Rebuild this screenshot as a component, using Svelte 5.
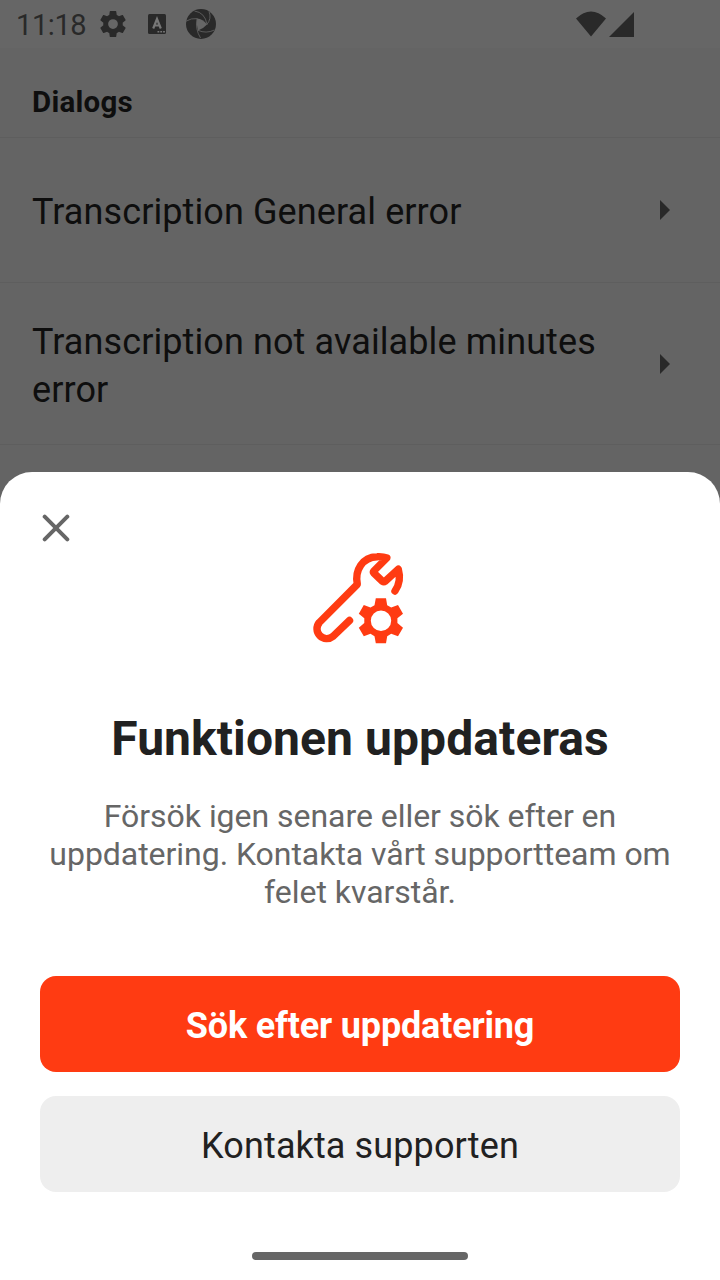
<script>
  const rows = ['Transcription General error', 'Transcription not available minutes error'];
  const gear = 'M19.14 12.94c.04-.3.06-.61.06-.94 0-.32-.02-.64-.07-.94l2.03-1.58c.18-.14.23-.41.12-.61l-1.92-3.32c-.12-.22-.37-.29-.59-.22l-2.39.96c-.5-.38-1.03-.7-1.62-.94l-.36-2.54c-.04-.24-.24-.41-.48-.41h-3.84c-.24 0-.43.17-.47.41l-.36 2.54c-.59.24-1.13.57-1.62.94l-2.39-.96c-.22-.08-.47 0-.59.22L2.74 8.87c-.12.21-.08.47.12.61l2.03 1.58c-.05.3-.09.63-.09.94s.02.64.07.94l-2.03 1.58c-.18.14-.23.41-.12.61l1.92 3.32c.12.22.37.29.59.22l2.39-.96c.5.38 1.03.7 1.62.94l.36 2.54c.05.24.24.41.48.41h3.84c.24 0 .44-.17.47-.41l.36-2.54c.59-.24 1.13-.56 1.62-.94l2.39.96c.22.08.47 0 .59-.22l1.92-3.32c.12-.22.07-.47-.12-.61z';
</script>

<div class="screen">
  <header class="status">
    <span class="time">11:18</span>
    <svg class="gear" viewBox="2.4 2.4 19.2 19.2"><path fill-rule="evenodd" d="{gear}M12 15.6a3.6 3.6 0 1 1 0-7.2 3.6 3.6 0 0 1 0 7.2z" /></svg>
    <svg class="keyboard" viewBox="0 0 18 20">
      <rect width="18" height="20" rx="1.5" />
      <path d="M5.2 14.5 9 5l3.8 9.5M6.5 11.5h5" fill="none" stroke="#777" stroke-width="2.2" />
      <path d="M9.5 17.7h1.8m1 0h1.8m1 0h1.8" stroke="#777" stroke-width="1.5" />
    </svg>
    <svg class="swirl" viewBox="0 0 30 30">
      <circle cx="15" cy="15" r="15" />
      <path d="M11 9.5Q17 10 21 15.5Q17 20 12 21.5Q10 15 11 9.5Z" fill="#666" />
      <g fill="none" stroke="#606060" stroke-width=".9">
        <path d="M0 12.2Q5 9 11.5 9.6" />
        <path d="M8.5 2Q19 3.5 21 15.5" />
        <path d="M23 2.5Q26 9.5 20.5 16" />
        <path d="M28.5 21Q20 25 12 21.3" />
        <path d="M11 10Q9 20 14.5 29" />
      </g>
    </svg>
    <svg class="signals" viewBox="0 0 59 26">
      <path d="M0 7.5Q15-6.5 30 7.5L15 25.5ZM58 1V26H33Z" />
    </svg>
  </header>
  <main>
    <h2>Dialogs</h2>
    {#each rows as row}
      <div class="row"><span>{row}</span><svg viewBox="0 0 10 20"><path d="M0 0 10 10 0 20Z" /></svg></div>
    {/each}
  </main>
  <section class="sheet">
    <button class="close" aria-label="Stäng"><svg viewBox="0 0 28 28"><path d="M2.7 2.7 25.3 25.3M25.3 2.7 2.7 25.3" /></svg></button>
    <svg class="tool" viewBox="0 0 120 120">
      <path class="wrench" d="M49.5 80.5 33 96.4A9.8 9.8 0 0 1 19.3 82.5L57.3 44.3C54.5 30 62.5 17.2 77 16.7C80.5 16.5 84 16.8 86.8 18L73.8 31Q73 32 73.8 33L82.4 41.2Q83.8 42.2 85.2 41.2L98.3 29.2C100.5 37 99.2 45 95 51" />
      <path class="cog" fill-rule="evenodd" d="M75.8 58.2H86L87.2 65.2 91.2 67.6 98 65 103 73.8 97.4 78.3V83L103 87.7 98 96.3 91.2 93.8 87.2 96.2 86 103.2H75.8L74.5 96.2 70.5 93.8 63.8 96.3 58.8 87.7 64.3 83V78.3L58.8 73.8 63.8 65 70.5 67.6 74.5 65.2ZM81 70.5A10.2 10.2 0 1 0 81 90.9A10.2 10.2 0 1 0 81 70.5Z" />
    </svg>
    <h1>Funktionen uppdateras</h1>
    <p>Försök igen senare eller sök efter en<br />uppdatering. Kontakta vårt supportteam om<br />felet kvarstår.</p>
    <button class="action primary">Sök efter uppdatering</button>
    <button class="action secondary">Kontakta supporten</button>
    <div class="home"></div>
  </section>
</div>

<style>
  :global(body) { margin: 0; }
  .screen { width: 720px; height: 1280px; display: flex; flex-direction: column; overflow: hidden; background: #646464; font-family: Roboto, sans-serif; color: #0e0e0e; }
  svg { display: block; flex: none; }
  .status { height: 48px; box-sizing: border-box; display: flex; align-items: center; padding: 0 85px 0 16px; background: #666; color: #292929; fill: #292929; }
  .time { width: 84px; font-size: 29px; line-height: 48px; letter-spacing: -.4px; padding-top: 2px; box-sizing: border-box; white-space: nowrap; }
  .gear { width: 26px; height: 26px; }
  .keyboard { width: 18px; height: 20px; margin-left: 22px; }
  .swirl { width: 30px; height: 30px; margin-left: 20px; }
  .signals { width: 59px; height: 26px; margin-left: auto; }
  main { height: 424px; flex: none; }
  h2 { height: 90px; margin: 0; box-sizing: border-box; padding: 31px 32px 0; border-bottom: 1px solid #5e5e5e; font-size: 29.5px; line-height: 46px; font-weight: 700; letter-spacing: .25px; }
  .row { height: 145px; display: flex; align-items: center; justify-content: space-between; box-sizing: border-box; padding: 0 50px 0 32px; border-bottom: 1px solid #5e5e5e; font-size: 36px; line-height: 48px; letter-spacing: .1px; }
  .row + .row { height: 162px; }
  .row span { width: 590px; padding-top: 3px; }
  .row + .row span { padding-top: 5px; }
  .row svg { width: 10px; height: 20px; fill: #292929; }
  .sheet { flex: 1; background: #fff; border-radius: 32px 32px 0 0; padding: 42px 40px 20px; box-sizing: border-box; display: flex; flex-direction: column; align-items: center; }
  button { font: inherit; border: 0; padding: 0; background: none; flex: none; }
  .close { align-self: flex-start; width: 32px; height: 28px; padding-left: 2px; }
  .close svg { width: 28px; height: 28px; fill: none; stroke: #666; stroke-width: 4; stroke-linecap: round; }
  .tool { width: 120px; height: 120px; margin-top: -2px; }
  .wrench { fill: none; stroke: #ff3b12; stroke-width: 7.4; stroke-linecap: round; stroke-linejoin: round; }
  .cog { fill: #ff3b12; }
  h1 { margin: 51px 0 0; font-size: 48px; line-height: 56px; font-weight: 700; color: #212121; white-space: nowrap; letter-spacing: .08px; }
  p { margin: 30px 0 0; font-size: 32px; line-height: 38px; text-align: center; color: #666; white-space: nowrap; letter-spacing: -.04px; }
  .action { width: 640px; height: 96px; border-radius: 16px; font-size: 36px; letter-spacing: .12px; padding-top: 3px; }
  .primary { margin-top: 65px; background: #ff3b12; color: #fff; font-weight: 700; letter-spacing: -.17px; }
  .secondary { margin-top: 24px; background: #eee; color: #212121; }
  .home { width: 216px; height: 8px; flex: none; margin-top: auto; border-radius: 4px; background: #666; }
</style>
